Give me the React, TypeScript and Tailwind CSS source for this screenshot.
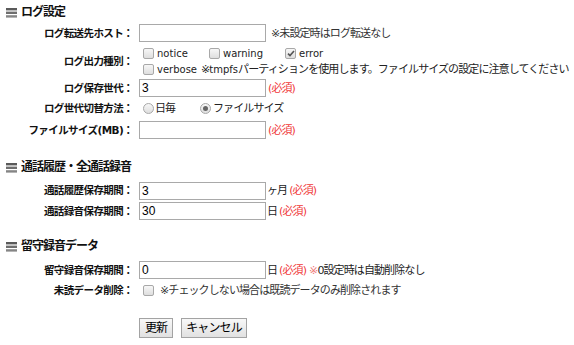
import React from 'react';

const Req = () => <span className="text-[#f03a3a] ml-[2px]">(必須)</span>;

const SectionIcon = () => (
  <svg width="11" height="10" viewBox="0 0 11 10" className="shrink-0">
    <rect x="0" y="0" width="11" height="2.4" fill="#5a5a5a" />
    <rect x="0" y="3.6" width="11" height="2.4" fill="#6e6e6e" />
    <rect x="0" y="7.2" width="11" height="2.4" fill="#858585" />
  </svg>
);

const Header = ({ title, className = '' }: { title: string; className?: string }) => (
  <div className={`flex items-end h-[22px] pl-[6px] pb-[4px] ${className}`}>
    <SectionIcon />
    <span className="ml-[4px] text-[12px] leading-none font-bold text-[#111] tracking-[-1px]">{title}</span>
  </div>
);

const Check = ({ checked = false }: { checked?: boolean }) => (
  <span className="inline-flex items-center justify-center w-[11px] h-[11px] border border-[#a8a8a8] rounded-[2px] bg-gradient-to-b from-[#f7f7f7] to-[#dedede] shrink-0">
    {checked && (
      <svg width="8" height="7" viewBox="0 0 8 7">
        <path d="M1 3.6 L3 5.6 L7 1" stroke="#555" strokeWidth="1.6" fill="none" />
      </svg>
    )}
  </span>
);

const Radio = ({ checked = false }: { checked?: boolean }) => (
  <span className="inline-flex items-center justify-center w-[11px] h-[11px] border border-[#a8a8a8] rounded-full bg-gradient-to-b from-[#f7f7f7] to-[#dedede] shrink-0">
    {checked && <span className="w-[5px] h-[5px] rounded-full bg-[#666]" />}
  </span>
);

const Input = ({ value = '' }: { value?: string }) => (
  <div className="w-[127px] h-[18px] border border-[#a9a9a9] bg-white flex items-center px-[2px] text-[12px] font-['Liberation_Sans',sans-serif] text-black tracking-normal shrink-0">
    {value}
  </div>
);

const Row = ({ label, h, children }: { label: string; h: string; children: React.ReactNode }) => (
  <div className={`flex items-center ${h}`}>
    <div className="w-[133px] shrink-0 text-right font-bold text-[#111] text-[10.5px] tracking-[-0.6px]">{label}</div>
    <div className="ml-[6px] flex items-center">{children}</div>
  </div>
);

const Latin = ({ children }: { children: React.ReactNode }) => (
  <span className="text-[10px] tracking-normal">{children}</span>
);

export default function App() {
  return (
    <div className="w-[574px] h-[345px] bg-white overflow-hidden text-[11px] leading-none tracking-[-0.9px] text-[#222] font-['DejaVu_Sans','Noto_Sans_CJK_JP',sans-serif]">
      <Header title="ログ設定" />

      <Row label="ログ転送先ホスト：" h="h-[22px]">
        <Input />
        <span className="ml-[5px] text-[#333]">※未設定時はログ転送なし</span>
      </Row>

      <Row label="ログ出力種別：" h="h-[34px]">
        <div className="flex flex-col">
          <div className="flex items-center h-[16px] pl-[4px]">
            <div className="flex items-center w-[66px]">
              <Check />
              <span className="ml-[3px]"><Latin>notice</Latin></span>
            </div>
            <div className="flex items-center w-[76px]">
              <Check />
              <span className="ml-[3px]"><Latin>warning</Latin></span>
            </div>
            <div className="flex items-center">
              <Check checked />
              <span className="ml-[3px]"><Latin>error</Latin></span>
            </div>
          </div>
          <div className="flex items-center h-[16px] pl-[4px] whitespace-nowrap">
            <Check />
            <span className="ml-[3px]"><Latin>verbose</Latin></span>
            <span className="ml-[4px]">※<Latin>tmpfs</Latin>パーティションを使用します。ファイルサイズの設定に注意してください</span>
          </div>
        </div>
      </Row>

      <Row label="ログ保存世代：" h="h-[20px]">
        <Input value="3" />
        <Req />
      </Row>

      <Row label="ログ世代切替方法：" h="h-[21px]">
        <div className="flex items-center pl-[4px]">
          <div className="flex items-center w-[57px]">
            <Radio />
            <span className="ml-[1px]">日毎</span>
          </div>
          <div className="flex items-center">
            <Radio checked />
            <span className="ml-[2px]">ファイルサイズ</span>
          </div>
        </div>
      </Row>

      <Row label="ファイルサイズ(MB)：" h="h-[22px]">
        <Input />
        <Req />
      </Row>

      <Header title="通話履歴・全通話録音" className="mt-[14px]" />

      <Row label="通話履歴保存期間：" h="h-[21px] mt-[3px]">
        <Input value="3" />
        <span className="ml-[1px]">ヶ月</span>
        <Req />
      </Row>

      <Row label="通話録音保存期間：" h="h-[20px]">
        <Input value="30" />
        <span className="ml-[1px]">日</span>
        <Req />
      </Row>

      <Header title="留守録音データ" className="mt-[13px]" />

      <Row label="留守録音保存期間：" h="h-[22px] mt-[3px]">
        <Input value="0" />
        <span className="ml-[1px]">日</span>
        <Req />
        <span className="ml-[3px] text-[#f07a7a]">※</span>
        <span>0設定時は自動削除なし</span>
      </Row>

      <Row label="未読データ削除：" h="h-[18px]">
        <div className="flex items-center pl-[4px]">
          <Check />
          <span className="ml-[6px] text-[#333]">※チェックしない場合は既読データのみ削除されます</span>
        </div>
      </Row>

      <div className="flex gap-[8px] pl-[139px] mt-[19px]">
        <button className="h-[20px] w-[34px] border border-[#a3a3a3] bg-gradient-to-b from-[#f8f8f8] to-[#e1e1e1] text-[12px] text-black">
          更新
        </button>
        <button className="h-[20px] w-[66px] border border-[#a3a3a3] bg-gradient-to-b from-[#f8f8f8] to-[#e1e1e1] text-[12px] text-black">
          キャンセル
        </button>
      </div>
    </div>
  );
}
